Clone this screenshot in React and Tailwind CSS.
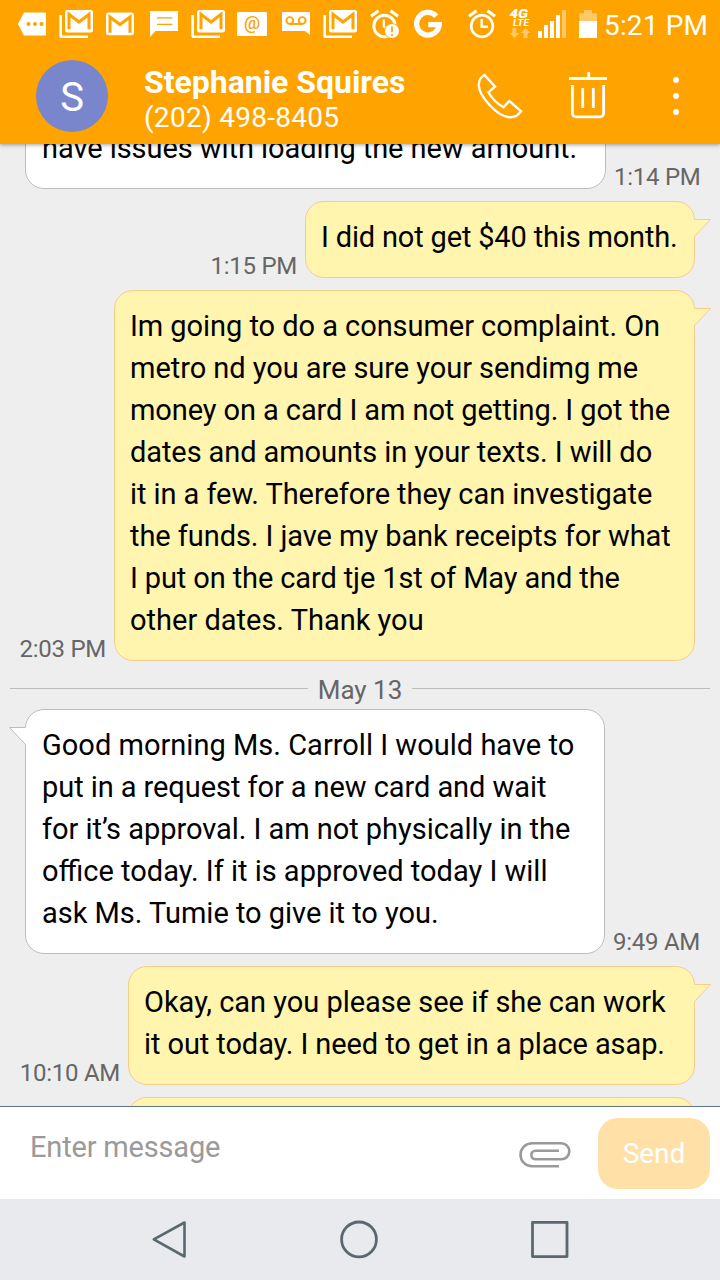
// lines hold [text, letter spacing in px]
const messages = [
  {
    id: 1,
    from: 'them',
    time: '1:14 PM',
    width: 'w-[581px]',
    tail: false,
    lines: [['have issues with loading the new amount.', -0.06]],
  },
  {
    id: 2,
    from: 'me',
    time: '1:15 PM',
    width: 'w-[390px]',
    tail: true,
    lines: [['I did not get $40 this month.', -0.17]],
  },
  {
    id: 3,
    from: 'me',
    time: '2:03 PM',
    width: 'w-[581px]',
    tail: true,
    lines: [
      ['Im going to do a consumer complaint. On', -0.05],
      ['metro nd you are sure your sendimg me', -0.05],
      ['money on a card I am not getting. I got the', -0.09],
      ['dates and amounts in your texts. I will do', -0.09],
      ['it in a few. Therefore they can investigate', -0.07],
      ['the funds. I jave my bank receipts for what', -0.07],
      ['I put on the card tje 1st of May and the', -0.12],
      ['other dates. Thank you', 0],
    ],
  },
  { id: 4, divider: 'May 13' },
  {
    id: 5,
    from: 'them',
    time: '9:49 AM',
    width: 'w-[580px]',
    tail: true,
    lines: [
      ['Good morning Ms. Carroll I would have to', 0.02],
      ['put in a request for a new card and wait', -0.07],
      ['for it’s approval. I am not physically in the', -0.04],
      ['office today. If it is approved today I will', 0],
      ['ask Ms. Tumie to give it to you.', -0.02],
    ],
  },
  {
    id: 6,
    from: 'me',
    time: '10:10 AM',
    width: 'w-[567px]',
    tail: true,
    lines: [
      ['Okay, can you please see if she can work', -0.02],
      ['it out today. I need to get in a place asap.', -0.09],
    ],
  },
  { id: 7, from: 'me', time: '', width: 'w-[567px]', tail: true, lines: [['', 0]] },
];

const ORANGE = '#ffa300';

function StatusIcon({ children }) {
  return (
    <svg viewBox="0 0 44 48" className="w-11 h-12 shrink-0" fill="#fff">
      {children}
    </svg>
  );
}

function MailStack() {
  return (
    <StatusIcon>
      <path d="M5.3 15H8v20.4h26V38H7.3a2 2 0 0 1-2-2z" />
      <rect x="11" y="10" width="28" height="22.5" rx="2.5" />
      <path d="M15 29.3V14.3l10 7.7 10-7.7v15" fill="none" stroke={ORANGE} strokeWidth="3" />
    </StatusIcon>
  );
}

function StatusBar() {
  return (
    <div className="flex h-12 pl-2.5 text-white">
      <StatusIcon>
        <path d="M8 24l6-11.5h22v23H14z" />
        <g fill={ORANGE}>
          <circle cx="18.5" cy="24" r="2" />
          <circle cx="25" cy="24" r="2" />
          <circle cx="31.5" cy="24" r="2" />
        </g>
      </StatusIcon>
      <MailStack />
      <StatusIcon>
        <rect x="8" y="12.5" width="28" height="22.8" rx="2.5" />
        <path d="M12 32.8V17l10 7.5L32 17v15.8" fill="none" stroke={ORANGE} strokeWidth="3" />
      </StatusIcon>
      <StatusIcon>
        <path d="M8 11h28v20H13.5L8 37z" />
        <path d="M15 17.8h15.3M15 24.3h15.3" stroke={ORANGE} strokeWidth="1.3" />
      </StatusIcon>
      <MailStack />
      <StatusIcon>
        <rect x="7" y="12" width="30" height="24" rx="1.5" />
        <text x="22" y="29.3" textAnchor="middle" fontSize="18" fontWeight="500" fontFamily="Roboto, sans-serif" fill={ORANGE}>
          @
        </text>
      </StatusIcon>
      <StatusIcon>
        <path d="M8 12h28v23l-5-4H8z" />
        <g fill="none" stroke={ORANGE} strokeWidth="1.9">
          <circle cx="15.8" cy="20.5" r="3.4" />
          <circle cx="28.2" cy="20.5" r="3.4" />
          <path d="M15.8 24h12.4" />
        </g>
      </StatusIcon>
      <MailStack />
      <StatusIcon>
        <g fill="none" stroke="#fff" strokeWidth="3">
          <circle cx="22.5" cy="26" r="10.7" />
          <path d="M9 16.3l7.5-5.6M28.5 10.7l7.5 5.6" />
          <path d="M21.8 19.5v7l3 2.2" strokeWidth="2.2" />
        </g>
        <circle cx="30" cy="31" r="7.8" fill={ORANGE} />
        <circle cx="30" cy="31" r="7" />
        <path d="M30 26.5v5.8M30 34v2" stroke={ORANGE} strokeWidth="1.7" />
      </StatusIcon>
      <StatusIcon>
        <path d="M30.3 16.1A11.3 11.3 0 1 0 33.2 24.7H22.3" fill="none" stroke="#fff" strokeWidth="5.3" />
      </StatusIcon>
      <svg viewBox="0 0 150 48" className="w-[150px] h-12 ml-[10px] shrink-0" fill="#fff">
        <g fill="none" stroke="#fff">
          <circle cx="22" cy="26" r="10.8" strokeWidth="2.7" />
          <path d="M9 16.3l7.5-5.6M27.5 10.7l7.5 5.6" strokeWidth="3" />
          <path d="M21.7 19v7.7h6.3" strokeWidth="2.4" />
        </g>
        <text x="49.5" y="18" fontSize="12.5" fontWeight="900" fontStyle="italic" textLength="18.5" lengthAdjust="spacingAndGlyphs" fontFamily="Roboto, sans-serif">
          4G
        </text>
        <text x="53" y="26.3" fontSize="9.5" fontWeight="700" fontStyle="italic" textLength="16" lengthAdjust="spacingAndGlyphs" fontFamily="Roboto, sans-serif">
          LTE
        </text>
        <g fillOpacity="0.4">
          <path d="M52.3 28h4v5h3.5L54.5 38l-5.3-5h3.1zM63.5 38h4v-5h3L65.5 28l-5 5h3z" />
          <path d="M102 10h4v28h-4zM124 10h8v3.3h5V21h-18v-7.7h5z" />
        </g>
        <path d="M78 31h4v7h-4zM84 25h4v13h-4zM90 21h4v17h-4zM96 15h4v23h-4zM119 21h18v17h-18z" />
      </svg>
      <span className="ml-[-6px] pt-[10px] text-[28px] leading-8 tracking-[0.15px] whitespace-nowrap">5:21 PM</span>
    </div>
  );
}

function Header() {
  return (
    <header className="relative z-10 h-36 shrink-0 bg-[#ffa300] text-white shadow-[0_1px_4px_rgba(0,0,0,0.35)]">
      <StatusBar />
      <div className="flex h-24 items-center pl-9">
        <div className="flex size-[72px] items-center justify-center rounded-full bg-[#7986cb] pt-[3px] text-[40px] leading-none">
          S
        </div>
        <div className="ml-9 w-[332px] pt-[7px] whitespace-nowrap">
          <div className="text-[32px] leading-9 font-bold tracking-[-0.02px]">Stephanie Squires</div>
          <div className="text-[28px] leading-9 tracking-[0.28px]">(202) 498-8405</div>
        </div>
        <svg viewBox="0 0 48 48" className="size-12" fill="none" stroke="#fff" strokeWidth="2.4">
          <path d="M8.5 3L19 14.7l-6.6 5.6C15.5 26 21 31.6 27.5 35.3L33.3 29 45 39.2C42 44 37.5 45.6 33 45.2 27 44.5 20.5 40.5 14 33.5 7 26 3 20 2.8 13.5 2.7 8.5 4.5 5 8.5 3z" />
        </svg>
        <svg viewBox="0 0 48 48" className="ml-10 size-12" fill="none" stroke="#fff" strokeWidth="2.8">
          <path d="M5 6.5h38M24.7 0v6M8.4 13v28.2a3.6 3.6 0 0 0 3.6 3.6h24a3.6 3.6 0 0 0 3.6-3.6V13M18.7 16v20M29.3 16v20" />
        </svg>
        <div className="ml-[61px] flex flex-col gap-[10px]">
          <span className="size-1.5 rounded-full bg-white" />
          <span className="size-1.5 rounded-full bg-white" />
          <span className="size-1.5 rounded-full bg-white" />
        </div>
      </div>
    </header>
  );
}

function Tail({ mine }) {
  if (mine) {
    return (
      <svg viewBox="0 0 18 20" className="absolute top-[16px] right-[-18px] h-5 w-[18px]">
        <path d="M0 1.5H16.5L.5 18.5H0z" fill="#fff5ae" />
        <path d="M.5 1.5H16.5L.5 18.5" fill="none" stroke="#f8cc8a" />
      </svg>
    );
  }
  return (
    <svg viewBox="0 0 18 20" className="absolute top-[16px] left-[-18px] h-5 w-[18px]">
      <path d="M18 1.5H1.5L17.5 18.5H18z" fill="#fff" />
      <path d="M17.5 1.5H1.5L17.5 18.5" fill="none" stroke="#bdbdbd" />
    </svg>
  );
}

function Message({ message }) {
  const mine = message.from === 'me';
  return (
    <div className={`flex items-end gap-2 ${mine ? 'flex-row-reverse pr-[25px]' : 'pl-[25px]'}`}>
      <div
        className={`relative shrink-0 rounded-[19px] border pt-[14px] pb-[19px] text-[29px] leading-[42px] whitespace-nowrap text-black ${message.width} ${
          mine ? 'border-[#f8cc8a] bg-[#fff5ae] pl-[15px]' : 'border-[#bdbdbd] bg-white pl-4'
        }`}
      >
        {message.lines.map(([text, spacing], i) => (
          <div key={i} className="h-[42px]" style={{ letterSpacing: spacing ? `${spacing}px` : undefined }}>
            {text}
          </div>
        ))}
        {message.tail && <Tail mine={mine} />}
      </div>
      <span className="text-[24px] leading-6 tracking-[-0.27px] whitespace-nowrap text-[#666]">{message.time}</span>
    </div>
  );
}

function DateDivider({ label }) {
  return (
    <div className="-my-3 flex h-12 items-center gap-[10px] px-[10px] text-[26px] text-[#666]">
      <span className="mt-[7px] h-px flex-1 bg-[#bdbdbd]" />
      <span className="pt-[10px] leading-[30px]">{label}</span>
      <span className="mt-[7px] h-px flex-1 bg-[#bdbdbd]" />
    </div>
  );
}

function Composer() {
  return (
    <div className="flex h-[93px] shrink-0 border-t border-[#5f7280] bg-white pr-[10px] pl-[30px]">
      <span className="mt-[22px] w-[489px] text-[29px] leading-9 tracking-[-0.18px] text-[#9a9a9a]">Enter message</span>
      <svg viewBox="0 0 52 28" className="mt-[34px] h-7 w-[52px]" fill="none" stroke="#9a9a9a" strokeWidth="2.6">
        <path d="M40 25.3H13a11.5 11.5 0 0 1 0-23h29.3a8 8 0 0 1 0 16H16.6a4.3 4.3 0 0 1 0-8.6H40" />
      </svg>
      <button className="mt-[11px] ml-[27px] h-[71px] w-28 rounded-[20px] bg-[#ffe0a6] text-[28px] text-white">
        Send
      </button>
    </div>
  );
}

function NavBar() {
  return (
    <nav className="flex h-[81px] shrink-0 bg-[#e9eaee] pt-5 pl-[149px]">
      <svg viewBox="0 0 40 40" className="size-10" fill="none" stroke="#5b6870" strokeWidth="2.6" strokeLinejoin="round">
        <path d="M4.8 20.4L35.5 3.5v34z" />
      </svg>
      <svg viewBox="0 0 40 40" className="ml-[150px] size-10" fill="none" stroke="#5b6870" strokeWidth="2.8">
        <circle cx="20" cy="20.4" r="17.4" />
      </svg>
      <svg viewBox="0 0 40 40" className="ml-[150px] size-10" fill="none" stroke="#5b6870" strokeWidth="2.8" strokeLinejoin="round">
        <path d="M3.5 3.3h34.5v34.3H3.5z" />
      </svg>
    </nav>
  );
}

export default function App() {
  return (
    <div className="flex h-[1280px] w-[720px] flex-col overflow-hidden bg-[#eee] font-[Roboto,sans-serif]">
      <Header />
      <main className="h-[962px] overflow-hidden">
        <div className="-mt-8 flex flex-col gap-3">
          {messages.map((m) =>
            m.divider ? <DateDivider key={m.id} label={m.divider} /> : <Message key={m.id} message={m} />
          )}
        </div>
      </main>
      <Composer />
      <NavBar />
    </div>
  );
}
